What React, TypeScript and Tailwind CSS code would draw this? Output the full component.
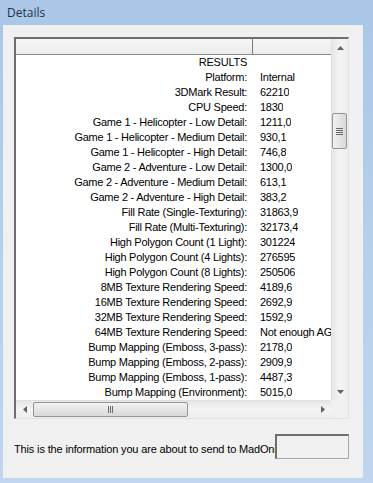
import React from 'react';

// Строки отчёта: подпись и значение
const rows: [string, string][] = [
    ['RESULTS', ''],
    ['Platform:', 'Internal'],
    ['3DMark Result:', '62210'],
    ['CPU Speed:', '1830'],
    ['Game 1 - Helicopter - Low Detail:', '1211,0'],
    ['Game 1 - Helicopter - Medium Detail:', '930,1'],
    ['Game 1 - Helicopter - High Detail:', '746,8'],
    ['Game 2 - Adventure - Low Detail:', '1300,0'],
    ['Game 2 - Adventure - Medium Detail:', '613,1'],
    ['Game 2 - Adventure - High Detail:', '383,2'],
    ['Fill Rate (Single-Texturing):', '31863,9'],
    ['Fill Rate (Multi-Texturing):', '32173,4'],
    ['High Polygon Count (1 Light):', '301224'],
    ['High Polygon Count (4 Lights):', '276595'],
    ['High Polygon Count (8 Lights):', '250506'],
    ['8MB Texture Rendering Speed:', '4189,6'],
    ['16MB Texture Rendering Speed:', '2692,9'],
    ['32MB Texture Rendering Speed:', '1592,9'],
    ['64MB Texture Rendering Speed:', 'Not enough AGP memory'],
    ['Bump Mapping (Emboss, 3-pass):', '2178,0'],
    ['Bump Mapping (Emboss, 2-pass):', '2909,9'],
    ['Bump Mapping (Emboss, 1-pass):', '4487,3'],
    ['Bump Mapping (Environment):', '5015,0'],
];

const Arrow: React.FC<{ dir: 'up' | 'down' | 'left' | 'right' }> = ({ dir }) => {
    const pts = {
        up: '0,4 7,4 3.5,0',
        down: '0,0 7,0 3.5,4',
        left: '4,0 4,7 0,3.5',
        right: '0,0 0,7 4,3.5',
    }[dir];
    const vertical = dir === 'up' || dir === 'down';
    return (
        <svg width={vertical ? 7 : 4} height={vertical ? 4 : 7} viewBox={vertical ? '0 0 7 4' : '0 0 4 7'}>
            <polygon points={pts} fill="#606060" />
        </svg>
    );
};

export default function App() {
    return (
        <div
            className="w-[373px] h-[483px] bg-gradient-to-b from-[#aac7e7] to-[#c0d6ee] flex flex-col"
            style={{ fontFamily: '"Liberation Sans", Arial, sans-serif' }}
        >
            {/* Заголовок окна */}
            <div className="h-[25px] pl-[7px] pt-[5px] text-[12px] leading-[15px] text-[#1e3148]" style={{ fontFamily: '"Open Sans", "Noto Sans", sans-serif' }}>
                Details
            </div>

            {/* Клиентская область */}
            <div className="ml-[3px] w-[360px] h-[453px] bg-[#f0f0f0] flex flex-col">
                {/* Список */}
                <div className="mt-[12px] ml-[11px] w-[335px] h-[382px] border-t-2 border-l-2 border-[#6e6e6e] border-r border-b border-r-[#e3e3e3] border-b-[#e3e3e3] bg-white flex flex-col">
                    <div className="flex flex-1 min-h-0">
                        <div className="w-[315px] flex flex-col overflow-hidden">
                            {/* Шапка колонок */}
                            <div className="h-[16px] flex border-b border-[#8a8a8a] bg-gradient-to-b from-[#f6f6f6] to-[#ececec] shrink-0">
                                <div className="w-[237px] border-r border-[#7a7a7a]" />
                                <div className="flex-1" />
                            </div>
                            {/* Строки */}
                            <div className="flex flex-col text-[11px] tracking-[-0.25px] text-black">
                                {rows.map(([label, value]) => (
                                    <div key={label} className="h-[15px] flex items-center whitespace-nowrap">
                                        <div className="w-[237px] shrink-0 text-right pr-[6px]">{label}</div>
                                        <div className="pl-[7px] overflow-hidden">{value}</div>
                                    </div>
                                ))}
                            </div>
                        </div>
                        {/* Вертикальная прокрутка */}
                        <div className="w-[17px] bg-gradient-to-r from-[#e6e6e6] via-[#f4f4f4] to-[#ededed] border-l border-[#e0e0e0] flex flex-col items-center">
                            <div className="h-[17px] flex items-center justify-center">
                                <Arrow dir="up" />
                            </div>
                            <div className="flex-1 w-full relative">
                                <div className="absolute left-[0px] top-[57px] w-[15px] h-[36px] rounded-[2px] border border-[#959595] bg-gradient-to-r from-[#f2f2f2] to-[#d8d8d8] flex flex-col items-center justify-center gap-[1px]">
                                    <div className="w-[7px] h-[1px] bg-[#6a6a6a]" />
                                    <div className="w-[7px] h-[1px] bg-[#6a6a6a]" />
                                    <div className="w-[7px] h-[1px] bg-[#6a6a6a]" />
                                    <div className="w-[7px] h-[1px] bg-[#6a6a6a]" />
                                </div>
                            </div>
                            <div className="h-[17px] flex items-center justify-center">
                                <Arrow dir="down" />
                            </div>
                        </div>
                    </div>
                    {/* Горизонтальная прокрутка */}
                    <div className="h-[18px] flex shrink-0">
                        <div className="w-[315px] bg-gradient-to-b from-[#e6e6e6] via-[#f4f4f4] to-[#ededed] border-t border-[#e0e0e0] flex items-center">
                            <div className="w-[17px] flex justify-center">
                                <Arrow dir="left" />
                            </div>
                            <div className="w-[155px] h-[15px] rounded-[2px] border border-[#959595] bg-gradient-to-b from-[#f2f2f2] to-[#d8d8d8] flex items-center justify-center gap-[1px]">
                                <div className="w-[1px] h-[7px] bg-[#6a6a6a]" />
                                <div className="w-[1px] h-[7px] bg-[#6a6a6a]" />
                                <div className="w-[1px] h-[7px] bg-[#6a6a6a]" />
                            </div>
                            <div className="flex-1" />
                            <div className="w-[17px] flex justify-center">
                                <Arrow dir="right" />
                            </div>
                        </div>
                        <div className="w-[17px] bg-[#f0f0f0]" />
                    </div>
                </div>

                {/* Нижняя строка */}
                <div className="mt-[15px] ml-[11px] flex items-start h-[25px]">
                    <div className="w-[261px] pt-[9px] leading-[13px] overflow-hidden whitespace-nowrap text-[11px] tracking-[-0.15px] text-black">
                        This is the information you are about to send to MadOnion.com
                    </div>
                    <div className="w-[74px] h-[25px] border-t-2 border-l-2 border-[#6e6e6e] border-r border-b border-r-[#a8a8a8] border-b-[#a8a8a8] bg-[#f0f0f0]" />
                </div>
            </div>
        </div>
    );
}
